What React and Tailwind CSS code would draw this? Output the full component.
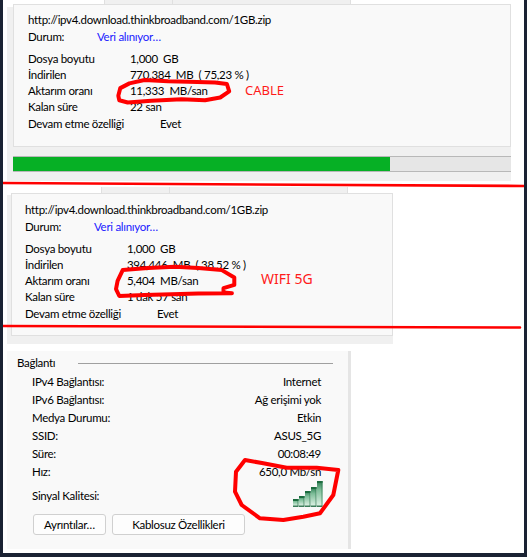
const K = 1 / 2.975;
const pts = (list, s, oy) => list.map(([x, y]) => `${(x * s).toFixed(1)},${(y * s + oy).toFixed(1)}`).join(" ");

const SCRIBBLE_1 = [[352,285],[358,262],[385,248],[430,238],[500,242],[560,243],[640,245],[675,250],[682,272],[655,290],[610,298],[540,295],[450,300],[380,305],[355,298],[352,285]];
const SCRIBBLE_2 = [[345,325],[350,300],[365,268],[440,262],[520,258],[590,262],[660,268],[697,290],[697,312],[665,322],[665,335],[690,337],[590,338],[430,342],[355,345],[345,325]];
const SCRIBBLE_3 = [[735,345],[708,380],[705,440],[725,480],[780,520],[850,525],[910,515],[960,505],[1000,450],[1015,375],[950,368],[860,368],[790,355],[735,345]];

function Row({ label, value, className = "", valueClass = "w-auto", labelClass = "w-[102px]" }) {
  return (
    <div className={`flex h-4 leading-4 ${className}`}>
      <span className={`shrink-0 ${labelClass}`}>{label}</span>
      <span className={`whitespace-pre ${valueClass}`}>{value}</span>
    </div>
  );
}

function DownloadBody({ downloaded, rate, left }) {
  return (
    <>
      <div className="h-4 leading-4">http://ipv4.download.thinkbroadband.com/1GB.zip</div>
      <Row className="mt-px" label="Durum:" value={<span className="text-[#1a1aff]">Veri alınıyor…</span>} labelClass="w-[69px]" />
      <Row className="mt-[6px]" label="Dosya boyutu" value="1,000  GB" />
      <Row label="İndirilen" value={downloaded} />
      <Row label="Aktarım oranı" value={rate} />
      <Row label="Kalan süre" value={left} />
      <Row className="mt-px" label="Devam etme özelliği" value="Evet" labelClass="w-[132px]" />
    </>
  );
}

function Tabs({ className }) {
  return (
    <div className={`flex ${className}`}>
      <div className="h-full w-[69px] border-x border-[#e0e0e0] bg-[#f0f0f0]" />
      <div className="h-full w-[178px] border-r border-[#e0e0e0] bg-[#f0f0f0]" />
    </div>
  );
}

function InfoRow({ label, value }) {
  return (
    <div className="flex h-[18px] items-center justify-between leading-[18px]">
      <span>{label}</span>
      <span>{value}</span>
    </div>
  );
}

function SignalIcon() {
  const xs = [0, 6, 12, 18, 24];
  const tops = [18, 15, 10, 6, 0];
  return (
    <svg width="30" height="26" viewBox="0 0 30 26" className="block">
      <defs>
        <linearGradient id="sig" x1="0" y1="0" x2="0" y2="1">
          <stop offset="0" stopColor="#2a7a50" />
          <stop offset="0.35" stopColor="#7dbd98" />
          <stop offset="1" stopColor="#dff3e6" />
        </linearGradient>
      </defs>
      {xs.map((x, i) => (
        <g key={x}>
          <rect x={x} y={tops[i]} width="5.5" height={25 - tops[i]} fill="url(#sig)" />
          <rect x={x} y={tops[i]} width="5.5" height="2" fill="#1b6b3e" />
          <rect x={x} y="24.5" width="5.5" height="1.5" fill="#3c7d5a" />
          <rect x={x + 4.5} y={tops[i]} width="1" height={25 - tops[i]} fill="#2d7a50" opacity="0.7" />
        </g>
      ))}
    </svg>
  );
}

export default function App() {
  return (
    <div className="relative h-[557px] w-[527px] overflow-hidden border-x-[3px] border-b-4 border-x-[#1a2233] border-b-[#1a2233] bg-white font-['Lato','Open_Sans',sans-serif] text-[11.5px] tracking-[-0.3px] text-black">
      {/* first download panel */}
      <div className="ml-[4px] mt-[7px] flow-root h-[174px] w-[504px] bg-[#f0f0f0]">
        <div className="-mt-[7px] flex h-[4px]">
          <div className="ml-[7px] w-[90px]" />
          <Tabs className="h-[4px]" />
        </div>
        <div className="ml-[6px] h-[143px] border border-[#e0e0e0] bg-[#f9f9f9] pl-[14px] pt-[7px]">
          <DownloadBody downloaded="770,384  MB  ( 75,23 % )" rate="11,333  MB/san" left="22 san" />
        </div>
        <div className="ml-[6px] mt-[9px] h-4 border-y border-[#b8b8b8] bg-[#e6e6e6]">
          <div className="h-full w-[377px] bg-[#06b025]" />
        </div>
      </div>

      {/* second download panel */}
      <div className="ml-[4px] mt-[14px] flow-root h-[149px] w-[386px] bg-[#f0f0f0]">
        <div className="-mt-[8px] flex h-[6px]">
          <div className="ml-[94px]" />
          <Tabs className="h-[6px]" />
        </div>
        <div className="ml-[4px] h-[143px] border border-[#e0e0e0] bg-[#f9f9f9] pl-[13px] pt-[8px]">
          <DownloadBody downloaded="394,446  MB  ( 38,52 % )" rate="5,404  MB/san" left="1 dak 57 san" />
        </div>
      </div>

      {/* connection panel */}
      <div className="ml-[4px] mt-[7px] h-[198px] w-[344px] border-r-[3px] border-[#e5e5e5] bg-[#f9f9f9] pl-[10px] pr-[15px] pt-[4px]">
        <div className="flex h-4 items-center leading-4">
          <span className="w-[61px]">Bağlantı</span>
          <span className="h-px flex-1 bg-[#a0a0a0]" />
        </div>
        <div className="mt-[2px] pl-[15px] pr-[12px]">
          <InfoRow label="IPv4 Bağlantısı:" value="Internet" />
          <InfoRow label="IPv6 Bağlantısı:" value="Ağ erişimi yok" />
          <InfoRow label="Medya Durumu:" value="Etkin" />
          <InfoRow label="SSID:" value="ASUS_5G" />
          <InfoRow label="Süre:" value="00:08:49" />
          <InfoRow label="Hız:" value="650,0 Mb/sn" />
          <div className="-mr-[2px] flex h-[26px] items-center justify-between">
            <span className="relative top-[2px]">Sinyal Kalitesi:</span>
            <SignalIcon />
          </div>
        </div>
        <div className="ml-[16px] mt-[7px] flex gap-[6px]">
          <button className="h-[21px] w-[73px] rounded-[3px] border border-[#d0d0d0] bg-[#fdfdfd] text-center leading-[19px]">Ayrıntılar…</button>
          <button className="h-[21px] w-[133px] rounded-[3px] border border-[#d0d0d0] bg-[#fdfdfd] text-center leading-[19px]">Kablosuz Özellikleri</button>
        </div>
      </div>

      {/* hand-drawn annotations over the screenshot */}
      <svg className="pointer-events-none absolute -left-[3px] top-0" width="527" height="557" fill="none" stroke="#ff0000" strokeLinejoin="round" strokeLinecap="round">
        <polyline points={pts(SCRIBBLE_1, K, 0)} strokeWidth="4" />
        <polyline points={pts(SCRIBBLE_2, K, 180)} strokeWidth="4" />
        <polyline points={pts(SCRIBBLE_3, 1 / 3, 345)} strokeWidth="4" />
        <line x1="0" y1="183" x2="524" y2="186" strokeWidth="2.6" />
        <line x1="3" y1="326" x2="520" y2="327.5" strokeWidth="2.6" />
      </svg>
      <span className="absolute left-[242px] top-[81px] font-['Noto_Sans',sans-serif] text-[13px] leading-[18px] tracking-normal text-[#ff1a1a]">CABLE</span>
      <span className="absolute left-[258px] top-[270px] font-['Noto_Sans',sans-serif] text-[14px] leading-[18px] tracking-normal text-[#ff1a1a]">WIFI 5G</span>
    </div>
  );
}
